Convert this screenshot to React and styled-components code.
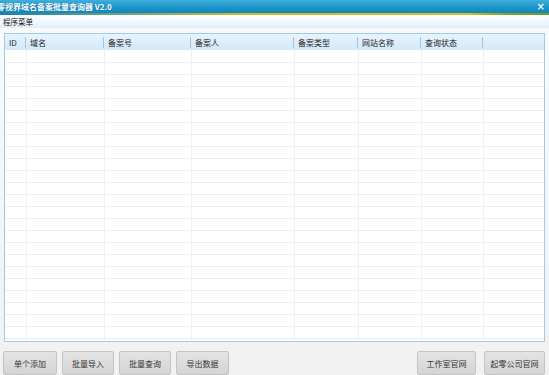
import React from 'react'
import styled, { createGlobalStyle } from 'styled-components'

const GlobalStyle = createGlobalStyle`
  html, body {
    margin: 0;
    padding: 0;
    background: #f3f3f3;
  }
  * { box-sizing: border-box; }
`

const CJK = `"Noto Sans CJK SC", "Liberation Sans", sans-serif`

const Window = styled.div`
  width: 549px;
  height: 375px;
  overflow: hidden;
  display: flex;
  flex-direction: column;
  background: #f3f3f3;
  font-family: ${CJK};
`

const TitleBar = styled.div`
  height: 13px;
  display: flex;
  align-items: center;
  justify-content: space-between;
  background: linear-gradient(to bottom, #3fb0dc, #1a93c8 60%, #1487bd);
  color: #fff;
`

const Title = styled.div`
  margin-left: -3px;
  font-size: 8px;
  font-weight: bold;
  line-height: 13px;
  white-space: nowrap;
  text-shadow: 0 0 1px rgba(0, 60, 100, 0.6);
`

const Close = styled.div`
  margin-right: 4px;
  font-family: "DejaVu Sans", sans-serif;
  font-size: 10px;
  font-weight: bold;
  line-height: 13px;
  color: #eaf6fc;
`

const Accent = styled.div`
  height: 2px;
  background: linear-gradient(to right, #1a80b0 0%, #6aa080 20%, #c9bf2a 45%, #cfc422 85%, #7aa72a 92%, #62a030 100%);
`

const MenuBar = styled.div`
  height: 16px;
  padding-left: 3px;
  display: flex;
  align-items: center;
  background: linear-gradient(to bottom, #ffffff, #eef5fc 60%, #e2eef9);
  font-size: 7.5px;
  color: #111;
`

const Body = styled.div`
  flex: 1;
  display: flex;
  flex-direction: column;
  padding: 5px 4px 0 4px;
  background: linear-gradient(to bottom, #f7f9fb, #f1f1f1);
`

const TableBox = styled.div`
  width: 541px;
  height: 309px;
  border: 1px solid #9ccbee;
  background: #fff;
  overflow: hidden;
`

const Grid = styled.table`
  border-collapse: collapse;
  table-layout: fixed;
  width: 100%;
`

const Head = styled.th`
  height: 16px;
  padding: 0 0 0 4px;
  text-align: left;
  font-weight: normal;
  font-size: 8px;
  color: #222;
  background: linear-gradient(to bottom, #e8f4fd, #d3e8fa);
  position: relative;
  white-space: nowrap;
  &::after {
    content: '';
    position: absolute;
    right: 0;
    top: 3px;
    bottom: 2px;
    width: 1px;
    background: ${p => (p.$last ? 'transparent' : '#a6c4df')};
  }
`

const Cell = styled.td`
  height: 12px;
  padding: 0;
  border-right: 1px solid #f0f0f0;
  border-bottom: 1px solid #eeeeee;
  &:last-child { border-right: none; }
`

const Footer = styled.div`
  margin-top: 9px;
  display: flex;
  justify-content: space-between;
  padding: 0 0 0 0;
  margin-left: -1px;
`

const Group = styled.div`
  display: flex;
  gap: ${p => p.$gap || 5}px;
`

const Button = styled.div`
  width: ${p => p.$w}px;
  height: 24px;
  display: flex;
  align-items: center;
  justify-content: center;
  border: 1px solid #c4c4c4;
  border-radius: 2px;
  background: linear-gradient(to bottom, #e4e4e4, #d4d4d4);
  font-size: 8px;
  color: #333;
`

const columns = [
  { w: 21, label: 'ID' },
  { w: 78, label: '域名' },
  { w: 87, label: '备案号' },
  { w: 103, label: '备案人' },
  { w: 64, label: '备案类型' },
  { w: 63, label: '网站名称' },
  { w: 62, label: '查询状态' },
  { w: 61, label: '' },
]

const rows = Array.from({ length: 25 }, (_, i) => i)

export default function App() {
  return (
    <>
      <GlobalStyle />
      <Window>
        <TitleBar>
          <Title>零视界域名备案批量查询器 V2.0</Title>
          <Close>×</Close>
        </TitleBar>
        <Accent />
        <MenuBar>程序菜单</MenuBar>
        <Body>
          <TableBox>
            <Grid>
              <colgroup>
                {columns.map((c, i) => <col key={i} style={{ width: c.w }} />)}
              </colgroup>
              <thead>
                <tr>
                  {columns.map((c, i) => (
                    <Head key={i} $last={i === columns.length - 1}>{c.label}</Head>
                  ))}
                </tr>
              </thead>
              <tbody>
                {rows.map(r => (
                  <tr key={r}>
                    {columns.map((c, i) => <Cell key={i} />)}
                  </tr>
                ))}
              </tbody>
            </Grid>
          </TableBox>
          <Footer>
            <Group $gap={5}>
              <Button $w={54}>单个添加</Button>
              <Button $w={52}>批量导入</Button>
              <Button $w={52}>批量查询</Button>
              <Button $w={53}>导出数据</Button>
            </Group>
            <Group $gap={8}>
              <Button $w={59}>工作室官网</Button>
              <Button $w={61}>起零公司官网</Button>
            </Group>
          </Footer>
        </Body>
      </Window>
    </>
  )
}
